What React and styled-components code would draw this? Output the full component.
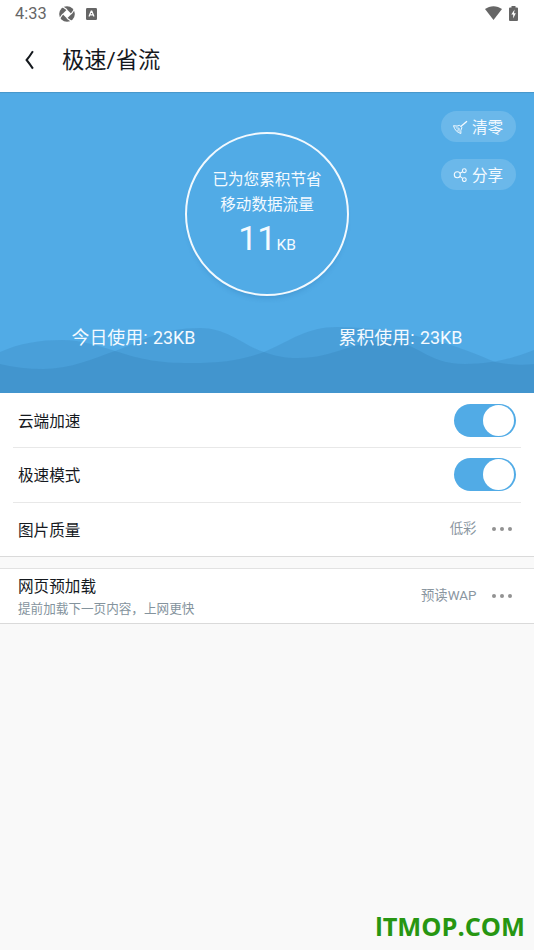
import React from 'react'
import styled, { createGlobalStyle } from 'styled-components';

const GlobalStyle = createGlobalStyle`
  * { box-sizing: border-box; }
  body {
    margin: 0;
    background: #f9f9f9;
    font-family: Roboto, 'Noto Sans CJK SC', sans-serif;
    color: #15191e;
  }
`

const Screen = styled.div`
  width: 534px;
  height: 950px;
  display: flex;
  flex-direction: column;
  overflow: hidden;
`

const StatusBar = styled.div`
  height: 28px;
  padding: 0 16px 0 15px;
  display: flex;
  align-items: center;
  background: #fff;
  color: #666;
  font-size: 16.4px;
`

const Time = styled.span`
  width: 44px;
  line-height: 28px;
`

const StatusIcons = styled.div`
  display: flex;
  align-items: center;
  gap: ${props => props.$gap}px;
  height: 28px;
  padding-bottom: ${props => props.$lift || 0}px;
  margin-left: ${props => (props.$end ? 'auto' : 0)};

  svg { display: block; }
`

const TitleBar = styled.header`
  height: 64px;
  padding-left: 24px;
  display: flex;
  align-items: center;
  background: #fff;

  svg { margin-right: 26px; }
`

const Title = styled.h1`
  margin: 0;
  font-size: 22.3px;
  font-weight: 400;
  line-height: 32px;
`

const Hero = styled.section`
  position: relative;
  height: 301px;
  flex: none;
  display: flex;
  flex-direction: column;
  align-items: center;
  justify-content: space-between;
  padding: 40px 0 42px;
  background: #51abe6;
  box-shadow: inset 0 2px 1px -1px #4796c9;
  color: #f4faff;
`

const Waves = styled.svg`
  position: absolute;
  left: 0;
  bottom: 0;
`

const Meter = styled.div`
  width: 164px;
  height: 164px;
  padding-top: 34px;
  border: 2px solid #f2f9fe;
  border-radius: 50%;
  box-shadow: 0 5px 5px -3px rgba(40, 110, 170, 0.3);
  background: #51abe6;
  text-align: center;
`

const MeterLabel = styled.div`
  font-size: 15.6px;
  line-height: 25px;
`

const MeterValue = styled.div`
  font-size: 34px;
  line-height: 40px;

  small { font-size: 15.5px; }
`

const HeroActions = styled.div`
  position: absolute;
  top: 19px;
  right: 18px;
  display: flex;
  flex-direction: column;
  gap: 17px;
`

const Pill = styled.button`
  width: 75px;
  height: 31px;
  padding: 0 0 2px 11px;
  display: flex;
  align-items: center;
  gap: 4px;
  border: 0;
  border-radius: 16px;
  background: #6bb8ea;
  color: #f4faff;
  font-family: inherit;
  font-size: 15.6px;
`

const Totals = styled.div`
  position: relative;
  align-self: stretch;
  display: grid;
  grid-template-columns: 1fr 1fr;
  font-size: 17.9px;
  line-height: 26px;
  word-spacing: 1px;
  text-align: center;
`

const Group = styled.section`
  background: #fff;
  border-bottom: 1px solid #dadada;
  border-top: ${props => (props.$spaced ? '1px solid #e2e2e2' : 0)};
  margin-top: ${props => (props.$spaced ? 11 : 0)}px;
`

const Row = styled.div`
  height: ${props => props.$height || 54}px;
  margin: 0 13px;
  padding: 0 5px ${props => props.$lift || 0}px;
  display: flex;
  align-items: center;
  justify-content: space-between;

  & + & { border-top: 1px solid #e8e8e8; }
`

const RowTitle = styled.div`
  padding-top: ${props => props.$low || 0}px;
  font-size: 15.6px;
  line-height: 24px;
`

const RowNote = styled.div`
  font-size: 12.6px;
  line-height: 20px;
  color: #84939d;
`

const RowValue = styled.div`
  display: flex;
  align-items: center;
  gap: 15px;
  padding-right: 4.5px;
  font-size: 13.4px;
  line-height: 20px;
  color: #8a969f;
`

const Dots = styled.span`
  display: flex;
  gap: 4px;

  i {
    width: 4px;
    height: 4px;
    border-radius: 50%;
    background: #929292;
  }
`

const Switch = styled.div`
  width: 62px;
  height: 33px;
  padding: 1px 2px 1px 0;
  display: flex;
  justify-content: flex-end;
  border-radius: 17px;
  background: #51abe6;
`

const Knob = styled.span`
  width: 31px;
  height: 31px;
  border-radius: 50%;
  background: #fff;
`

const Footer = styled.footer`
  margin-top: auto;
  padding: 0 9px 5px 0;
  text-align: right;
  font-family: 'Open Sans', sans-serif;
  font-size: 25.4px;
  font-weight: 700;
  line-height: 36px;
  color: #279612;

  span { font-family: Roboto, sans-serif; }
`

const ApertureIcon = () => (
  <svg width="16" height="16" viewBox="0 0 16 16">
    <circle cx="8" cy="8" r="7.8" fill="#666" />
    <path d="M8 3.500 12.500 8 8 12.500 3.500 8Z" fill="#fff" />
    <path d="M8 3.800 4 1M12.200 8 15 4M8 12.200 12 15M3.800 8 1 12" stroke="#fff" strokeWidth="1.200" />
  </svg>
)

const LetterIcon = () => (
  <svg width="11" height="12" viewBox="0 0 11 12">
    <rect width="11" height="12" rx="1.2" fill="#666" />
    <path d="M3 8.5 5.2 3.2h.6L8 8.5M3.9 6.8h3.2" fill="none" stroke="#fff" strokeWidth="1.2" />
  </svg>
)

const WifiIcon = () => (
  <svg width="17" height="14" viewBox="0 0 17 14">
    <path d="M0 3.1C4.8-.8 12.2-.8 17 3.1L8.5 14Z" fill="#666" />
  </svg>
)

const BatteryIcon = () => (
  <svg width="9" height="15" viewBox="0 0 9 15">
    <path d="M2.5 0h4v1.4H8q1 0 1 1V14q0 1-1 1H1q-1 0-1-1V2.400q0-1 1-1h1.500Z" fill="#666" />
    <path d="M5.600 3.600 2.300 8.600h1.900V12.500L6.800 7.300H5Z" fill="#fff" />
  </svg>
)

const BackIcon = () => (
  <svg width="12" height="20" viewBox="0 0 12 20">
    <path d="M8.900 1.200Q5.500 6.500 2.600 10q2.900 3.500 6.300 8.600" fill="none" stroke="#15191e" strokeWidth="2" />
  </svg>
)

const BroomIcon = () => (
  <svg width="16" height="16" viewBox="0 0 16 16" fill="none" stroke="#f4faff" strokeWidth="1">
    <path d="M8.800 8.600 15 3.200" strokeWidth="1.300" />
    <path d="M1.500 7.700q4 1 6.200-.4l2.200 2.400q-1.600 2.300-1 5.800Q3.200 14 1.500 7.700Z" />
    <path d="M3.800 9.800l3.300.4M5 12.300l2.200-.6M7.100 14.200V10" strokeWidth=".8" />
  </svg>
)

const ShareIcon = () => (
  <svg width="16" height="16" viewBox="0 0 16 16" fill="none" stroke="#f4faff" strokeWidth="1.100">
    <circle cx="5.300" cy="8.800" r="3" />
    <circle cx="12.300" cy="4.700" r="1.900" />
    <circle cx="12.300" cy="13.600" r="1.900" />
    <path d="m8 7.300 2.600-1.500M8 10.400l2.600 2" />
  </svg>
)

const More = () => <Dots><i /><i /><i /></Dots>

const App = () => {
  return (
    <Screen>
      <GlobalStyle />
      <StatusBar>
        <Time>4:33</Time>
        <StatusIcons $gap={11}>
          <ApertureIcon />
          <LetterIcon />
        </StatusIcons>
        <StatusIcons $gap={7} $lift={2} $end>
          <WifiIcon />
          <BatteryIcon />
        </StatusIcons>
      </StatusBar>
      <TitleBar>
        <BackIcon />
        <Title>极速/省流</Title>
      </TitleBar>
      <Hero>
        <Waves width="534" height="70" viewBox="0 323 534 70" fill="#1d5f8e" fillOpacity=".14">
          <path d="M0 352C20 343 40 340 62 340C82 340 99 346 115 351C143 360 160 363 190 363C222 363 242 360 264 352C292 340 307 327 337 327C405 327 462 347 495 362Q515 366 534 364V393H0Z" />
          <path d="M0 364Q20 369 43 369C70 369 92 359 115 351C145 340 162 328 200 328C228 328 244 346 264 352C276 356 284 358 298 358C335 358 352 341 385 341C418 341 426 364 465 364C494 364 513 358 534 350V393H0Z" />
        </Waves>
        <Meter>
          <MeterLabel>已为您累积节省</MeterLabel>
          <MeterLabel>移动数据流量</MeterLabel>
          <MeterValue>11<small>KB</small></MeterValue>
        </Meter>
        <HeroActions>
          <Pill><BroomIcon />清零</Pill>
          <Pill><ShareIcon />分享</Pill>
        </HeroActions>
        <Totals>
          <span>今日使用: 23KB</span>
          <span>累积使用: 23KB</span>
        </Totals>
      </Hero>
      <Group>
        <Row>
          <RowTitle $low={3}>云端加速</RowTitle>
          <Switch><Knob /></Switch>
        </Row>
        <Row $height={55} $lift={2}>
          <RowTitle $low={4}>极速模式</RowTitle>
          <Switch><Knob /></Switch>
        </Row>
        <Row $lift={1}>
          <RowTitle $low={4}>图片质量</RowTitle>
          <RowValue>低彩<More /></RowValue>
        </Row>
      </Group>
      <Group $spaced>
        <Row $height={54}>
          <div>
            <RowTitle $low={2}>网页预加载</RowTitle>
            <RowNote>提前加载下一页内容，上网更快</RowNote>
          </div>
          <RowValue>预读WAP<More /></RowValue>
        </Row>
      </Group>
      <Footer><span>I</span>TMOP.COM</Footer>
    </Screen>
  )
}

export default App
